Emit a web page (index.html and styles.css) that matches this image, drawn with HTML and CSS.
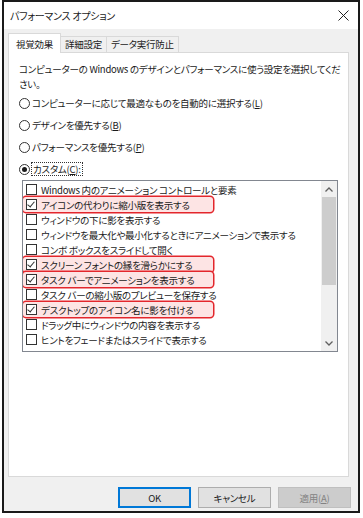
FILE: index.html
```html
<!DOCTYPE html>
<html lang="ja">
<head>
    <meta charset="UTF-8">
    <title>パフォーマンス オプション</title>
    <link rel="stylesheet" href="styles.css">
</head>
<body>
    <div class="dialog">
        <div class="titlebar">
            <span class="title">パフォーマンス オプション</span>
            <svg class="close" width="11" height="11" viewBox="0 0 11 11">
                <path d="M0.5 0.5 L10.5 10.5 M10.5 0.5 L0.5 10.5" stroke="#222" stroke-width="1" fill="none"/>
            </svg>
        </div>

        <div class="tabs">
            <div class="tab active">視覚効果</div>
            <div class="tab">詳細設定</div>
            <div class="tab">データ実行防止</div>
        </div>

        <div class="panel">
            <p class="desc">コンピューターの Windows のデザインとパフォーマンスに使う設定を選択してくだ<br>さい。</p>

            <div class="radio-row"><span class="radio"></span>コンピューターに応じて最適なものを自動的に選択する(<u>L</u>)</div>
            <div class="radio-row"><span class="radio"></span>デザインを優先する(<u>B</u>)</div>
            <div class="radio-row"><span class="radio"></span>パフォーマンスを優先する(<u>P</u>)</div>
            <div class="radio-row"><span class="radio on"></span><span class="focus">カスタム(<u>C</u>):</span></div>

            <div class="listbox">
                <div class="items">
                    <div class="item"><span class="check"></span>Windows 内のアニメーション コントロールと要素</div>
                    <div class="item marked"><span class="check on"></span>アイコンの代わりに縮小版を表示する</div>
                    <div class="item"><span class="check"></span>ウィンドウの下に影を表示する</div>
                    <div class="item"><span class="check"></span>ウィンドウを最大化や最小化するときにアニメーションで表示する</div>
                    <div class="item"><span class="check"></span>コンボ ボックスをスライドして開く</div>
                    <div class="item marked"><span class="check on"></span>スクリーン フォントの縁を滑らかにする</div>
                    <div class="item marked"><span class="check on"></span>タスク バーでアニメーションを表示する</div>
                    <div class="item"><span class="check"></span>タスク バーの縮小版のプレビューを保存する</div>
                    <div class="item marked"><span class="check on"></span>デスクトップのアイコン名に影を付ける</div>
                    <div class="item"><span class="check"></span>ドラッグ中にウィンドウの内容を表示する</div>
                    <div class="item"><span class="check"></span>ヒントをフェードまたはスライドで表示する</div>
                </div>
                <div class="scrollbar">
                    <div class="arrow">
                        <svg width="8" height="5" viewBox="0 0 8 5"><path d="M0.5 4.5 L4 1 L7.5 4.5" stroke="#606060" stroke-width="1.3" fill="none"/></svg>
                    </div>
                    <div class="track"><div class="thumb"></div></div>
                    <div class="arrow">
                        <svg width="8" height="5" viewBox="0 0 8 5"><path d="M0.5 0.5 L4 4 L7.5 0.5" stroke="#606060" stroke-width="1.3" fill="none"/></svg>
                    </div>
                </div>
            </div>
        </div>

        <div class="buttons">
            <button class="btn default">OK</button>
            <button class="btn">キャンセル</button>
            <button class="btn disabled">適用(<u>A</u>)</button>
        </div>
    </div>
</body>
</html>
```

FILE: styles.css
```css
body {
    margin: 0;
    background: #ffffff;
    font-family: "Noto Sans CJK JP", "Noto Sans", sans-serif;
    font-size: 9.5px;
    letter-spacing: -0.25px;
    font-feature-settings: "palt";
    color: #1a1a1a;
}
.dialog {
    margin-left: 2px;
    width: 358px;
    height: 513px;
    box-sizing: border-box;
    border: 2px solid #1a1a1a;
    background: #f0f0f0;
    display: flex;
    flex-direction: column;
}
.titlebar {
    height: 27px;
    background: #ffffff;
    display: flex;
    align-items: center;
    justify-content: space-between;
    padding: 0 9px 0 6px;
    flex-shrink: 0;
}
.title {
    font-size: 10px;
}
.tabs {
    display: flex;
    align-items: flex-end;
    padding: 4px 0 0 4px;
    height: 19px;
}
.tab {
    height: 16px;
    line-height: 15px;
    padding: 0 4px;
    box-sizing: border-box;
    border: 1px solid #d9d9d9;
    border-bottom: none;
    border-left: none;
    background: #f0f0f0;
}
.tab.active {
    height: 20px;
    line-height: 20px;
    margin-bottom: -1px;
    padding: 0 7px;
    background: #ffffff;
    border-left: 1px solid #d9d9d9;
    position: relative;
    z-index: 1;
}
.panel {
    margin: 0 9px 0 4px;
    height: 425px;
    box-sizing: border-box;
    background: #ffffff;
    border: 1px solid #d9d9d9;
    padding: 9px 10px 0 10px;
}
.desc {
    margin: 0;
    line-height: 15px;
    white-space: nowrap;
}
.radio-row {
    height: 22px;
    display: flex;
    align-items: center;
}
.radio {
    width: 11px;
    height: 11px;
    box-sizing: border-box;
    border: 1px solid #333333;
    border-radius: 50%;
    margin-right: 2px;
    display: flex;
    align-items: center;
    justify-content: center;
}
.radio.on::after {
    content: "";
    width: 5px;
    height: 5px;
    border-radius: 50%;
    background: #1a1a1a;
}
.focus {
    outline: 1px dotted #333333;
    padding: 0 1px;
    line-height: 12px;
}
.listbox {
    margin-left: 3px;
    width: 316px;
    height: 172px;
    box-sizing: border-box;
    border: 1px solid #828790;
    display: flex;
    overflow: hidden;
}
.items {
    flex: 1;
    padding-top: 1px;
    overflow: hidden;
}
.item {
    height: 15px;
    display: flex;
    align-items: center;
    padding-left: 3px;
    white-space: nowrap;
}
.item.marked {
    width: 190px;
    box-sizing: border-box;
    background: #fde4e4;
    box-shadow: 0 0 0 1.5px #e3262c;
    border-radius: 3px;
}
.check {
    width: 11px;
    height: 11px;
    box-sizing: border-box;
    border: 1px solid #333333;
    margin-right: 4px;
    flex-shrink: 0;
    background: #ffffff;
    position: relative;
}
.check.on::after {
    content: "";
    position: absolute;
    left: 2px;
    top: 0;
    width: 3px;
    height: 6px;
    border: solid #333333;
    border-width: 0 1px 1px 0;
    transform: rotate(40deg);
}
.scrollbar {
    width: 16px;
    background: #f0f0f0;
    display: flex;
    flex-direction: column;
}
.arrow {
    height: 16px;
    display: flex;
    align-items: center;
    justify-content: center;
}
.track {
    flex: 1;
}
.thumb {
    margin: 0 1px;
    height: 88px;
    background: #cdcdcd;
}
.buttons {
    display: flex;
    justify-content: flex-end;
    gap: 7px;
    padding: 10px 7px 0 0;
}
.btn {
    width: 73px;
    height: 21px;
    font-family: inherit;
    font-size: 9.5px;
    letter-spacing: -0.25px;
    font-feature-settings: "palt";
    color: #1a1a1a;
    background: #e1e1e1;
    border: 1px solid #adadad;
    padding: 0;
}
.btn.default {
    border: 2px solid #0078d7;
}
.btn.disabled {
    background: #cccccc;
    border-color: #bfbfbf;
    color: #838383;
}
```
